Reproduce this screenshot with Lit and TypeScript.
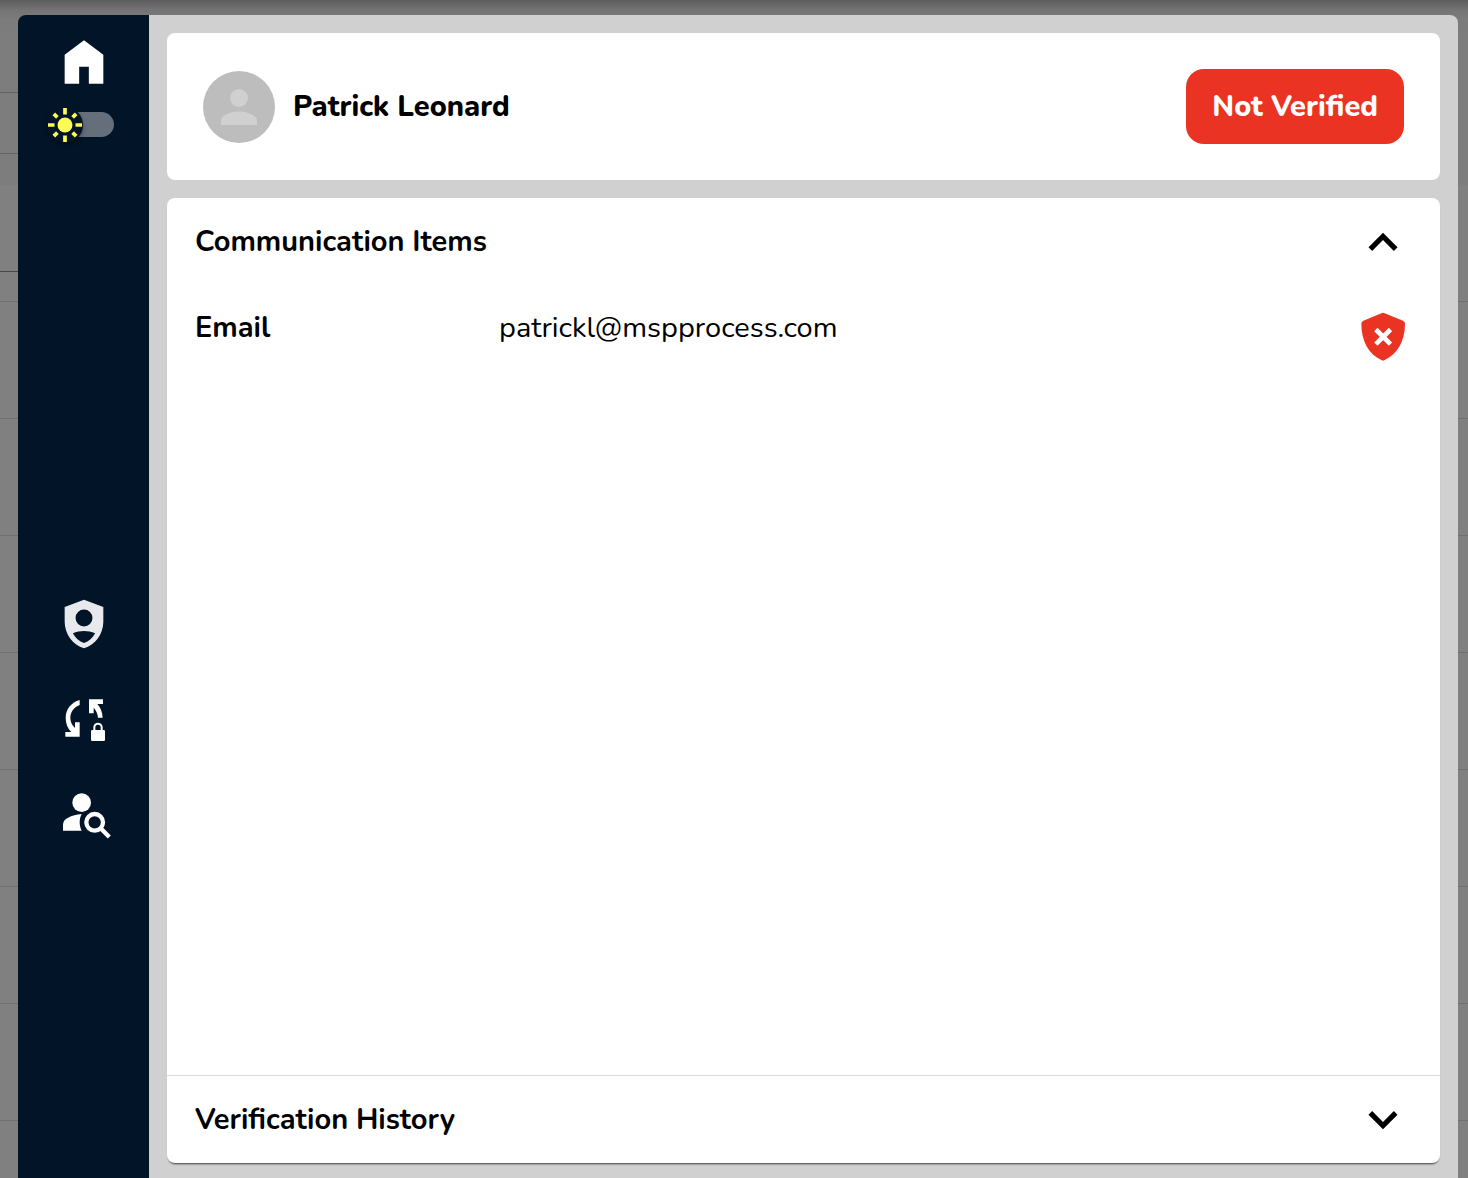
import { LitElement, html, css, svg } from "lit";
import { customElement, state } from "lit/decorators.js";

const homeIcon = svg`<svg class="icon" viewBox="0 0 24 24" aria-hidden="true"><path d="M4 21V9l8-6 8 6v12h-6v-7h-4v7z"/></svg>`;

const shieldPersonIcon = svg`<svg class="icon soft" viewBox="0 0 24 24" aria-hidden="true"><path fill-rule="evenodd" d="M12 2 4 5v6.1c0 5.05 3.4 9.75 8 10.9 4.6-1.15 8-5.85 8-10.9V5zM12 6a3.5 3.5 0 1 1 0 7 3.5 3.5 0 0 1 0-7zM7.4 15.8c2.9-1.2 6.3-1.2 9.2 0-1 1.9-2.6 3.4-4.6 4.1-2-.7-3.6-2.2-4.6-4.1z"/></svg>`;

const syncLockIcon = svg`<svg class="icon" viewBox="45 3 174 174" aria-hidden="true">
  <path d="M119 30v15C102 51 91 66 91 84c0 12 5 22 14 30V97h14v43H76v-14h18C83 116 77 101 77 84c0-26 17-47 42-54z"/>
  <path d="M147 28h42v14h-17c9 10 15 23 16 41h-14c-1-12-5-21-13-30v17h-14z"/>
  <rect x="153" y="120" width="42" height="33" rx="4"/>
  <path d="M163 122v-10a11 11 0 0 1 22 0v10" fill="none" stroke="currentColor" stroke-width="6"/>
</svg>`;

const personSearchIcon = svg`<svg class="icon" viewBox="45 291 174 174" aria-hidden="true">
  <circle cx="125" cy="338" r="28"/>
  <path d="M69 422v-18c0-10 6-17 15-21 12-6 26-10 41-11-8 15-8 34 0 50z"/>
  <circle cx="164" cy="397" r="25" fill="none" stroke="currentColor" stroke-width="13"/>
  <path d="M181 414l27 27" stroke="currentColor" stroke-width="13"/>
</svg>`;

const shieldCrossIcon = svg`<svg class="icon danger" viewBox="41 324 174 174" role="img" aria-label="Not verified">
  <path d="M125 339q3-1 6 0l57 23q6 3 6 9c0 53-24 92-61 109q-5 3-10 0C86 463 63 424 63 371q0-6 6-9z"/>
  <path d="M106.500 388.500l44 44M150.500 388.500l-44 44" stroke="#fff" stroke-width="14"/>
</svg>`;

const chevron = (up: boolean) => svg`<svg class="icon" viewBox="0 0 24 24" aria-hidden="true">${
  up
    ? svg`<path d="M12 8.200l-6 6 1.500 1.500 4.500-4.500 4.500 4.500 1.500-1.500z"/>`
    : svg`<path d="M16.500 8.300 12 12.800 7.500 8.300 6 9.800l6 6 6-6z"/>`
}</svg>`;

@customElement("backdrop-rows")
export class BackdropRows extends LitElement {
  static styles = css`
    :host { display: block; background: #808080; overflow: hidden; }
    .bar { height: 185px; background: linear-gradient(#5c5c5c, #747474 10px, #7c7c7c 20px, #7d7d7d); }
    .edge { width: 50%; box-sizing: border-box; border-bottom: 1px solid #626262; }
    .first { height: 93px; }
    .second { height: 61px; }
    .head { height: 87px; border-bottom-color: #474747; }
    .gap { height: 30px; box-sizing: border-box; border-bottom: 1px solid #707070; }
    .row { height: 117px; box-sizing: border-box; border-bottom: 1px solid #707070; }
  `;
  render() {
    return html`
      <div class="bar"><div class="edge first"></div><div class="edge second"></div></div>
      <div class="edge head"></div>
      <div class="gap"></div>
      ${Array.from({ length: 8 }, () => html`<div class="row"></div>`)}
    `;
  }
}

@customElement("app-root")
export class AppRoot extends LitElement {
  @state() private open = "items";

  static styles = css`
    :host {
      display: block;
      position: relative;
      min-height: 100vh;
      font-family: Nunito, Lato, "Open Sans", sans-serif;
      font-size: 29px;
      line-height: 40px;
      color: #000;
    }
    * { box-sizing: border-box; }
    button { font: inherit; color: inherit; border: 0; background: none; padding: 0; cursor: pointer; }
    h1, h2, dl, dd { margin: 0; font: inherit; }
    .backdrop { position: absolute; inset: 0; }
    .page { position: relative; display: flex; min-height: 100vh; padding: 15px 10px 0 18px; }
    .sidebar {
      flex: 0 0 131px;
      display: flex;
      flex-direction: column;
      align-items: center;
      padding-top: 18px;
      background: #021428;
      color: #fff;
      border-top-left-radius: 8px;
    }
    .icon { display: block; width: 58px; height: 58px; fill: currentColor; }
    .soft { color: #e8e9ec; }
    .danger { color: #eb3323; }
    .theme { position: relative; display: block; width: 73px; height: 40px; margin-top: 14px; padding: 7px 6px 8px; }
    .track { appearance: none; display: block; width: 100%; height: 25px; margin: 0; border-radius: 13px; background: #656e7b; cursor: pointer; }
    .thumb { position: absolute; left: 0; top: 2px; width: 36px; height: 36px; border-radius: 50%; background: #021428; box-shadow: 0 2px 4px rgba(0, 0, 0, 0.35); pointer-events: none; }
    .tools { display: flex; flex-direction: column; gap: 38px; }
    .above { flex: 23; }
    .below { flex: 17; }
    .content {
      flex: 1;
      min-width: 0;
      display: flex;
      flex-direction: column;
      gap: 18px;
      padding: 18px 18px 15px;
      background: #d0d0d0;
      border-top-right-radius: 8px;
    }
    .card { background: #fff; border-radius: 8px; }
    .person { display: flex; align-items: center; gap: 18px; padding: 36px; }
    .avatar { width: 72px; height: 72px; border-radius: 50%; background: #bdbdbd; color: #d0d0d0; display: grid; place-items: center; }
    .avatar svg { width: 54px; height: 54px; fill: currentColor; }
    .name { flex: 1; font-weight: 800; }
    .status { height: 75px; padding: 0 26px; border-radius: 18px; background: #eb3323; color: #fff; font-weight: 800; }
    .sections { flex: 1; display: flex; flex-direction: column; box-shadow: 0 3px 2px -2px rgba(0, 0, 0, 0.5), 0 2px 2px -1px rgba(0, 0, 0, 0.3); }
    .section { width: 100%; height: 87px; display: flex; align-items: center; justify-content: space-between; padding: 0 28px; font-weight: 700; }
    .divided { height: 88px; border-top: 1px solid #dcdcdc; }
    .body { flex: 1; padding: 23px 28px; }
    .item { display: grid; grid-template-columns: 304px 1fr auto; }
    .label { font-weight: 700; }
  `;

  private toggle(name: string) {
    this.open = this.open === name ? "" : name;
  }

  render() {
    return html`
      <backdrop-rows class="backdrop"></backdrop-rows>
      <div class="page">
        <nav class="sidebar" aria-label="Main">
          <button aria-label="Home">${homeIcon}</button>
          <label class="theme">
            <input class="track" type="checkbox" role="switch" aria-label="Dark theme" />
            <svg class="thumb" viewBox="-18 -18 36 36" aria-hidden="true">
              <circle r="7.5" fill="#fffd54"/>
              ${[0, 45, 90, 135, 180, 225, 270, 315].map(
                (a) => svg`<path d=${a % 90 ? "M0-10.8v-5" : "M0-10.500v-6.500"} stroke="#fffd54" stroke-width="3.7" transform="rotate(${a})"/>`
              )}
            </svg>
          </label>
          <div class="above"></div>
          <div class="tools">
            <button aria-label="Identity verification">${shieldPersonIcon}</button>
            <button aria-label="Password reset">${syncLockIcon}</button>
            <button aria-label="Find person">${personSearchIcon}</button>
          </div>
          <div class="below"></div>
        </nav>
        <main class="content">
          <header class="card person">
            <div class="avatar">
              <svg viewBox="0 0 24 24" aria-hidden="true"><path d="M12 12a4 4 0 1 0 0-8 4 4 0 0 0 0 8zm0 2c-2.7 0-8 1.3-8 4v2h16v-2c0-2.7-5.3-4-8-4z"/></svg>
            </div>
            <h1 class="name">Patrick Leonard</h1>
            <button class="status">Not Verified</button>
          </header>
          <section class="card sections">
            <h2>
              <button class="section" aria-expanded=${this.open === "items"} @click=${() => this.toggle("items")}>
                <span>Communication Items</span>${chevron(this.open === "items")}
              </button>
            </h2>
            <div class="body">
              ${this.open === "items"
                ? html`<dl class="item">
                    <dt class="label">Email</dt>
                    <dd>patrickl@mspprocess.com</dd>
                    <dd>${shieldCrossIcon}</dd>
                  </dl>`
                : ""}
            </div>
            <h2>
              <button class="section divided" aria-expanded=${this.open === "history"} @click=${() => this.toggle("history")}>
                <span>Verification History</span>${chevron(this.open === "history")}
              </button>
            </h2>
          </section>
        </main>
      </div>
    `;
  }
}
